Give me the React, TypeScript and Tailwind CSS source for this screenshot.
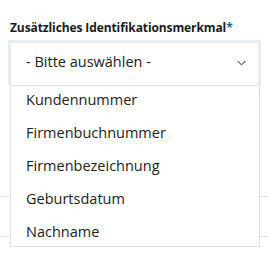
import React from "react";

const items = ["Kundennummer", "Firmenbuchnummer", "Firmenbezeichnung", "Geburtsdatum", "Nachname"];

export default function App() {
  return (
    <div className="relative w-[268px] h-[271px] bg-white overflow-hidden" style={{ fontFamily: '"Open Sans", "Noto Sans", sans-serif' }}>
      <div className="pt-[19px] pl-[10px]">
        <div className="text-[12px] font-bold leading-[18px] text-[#1b1b1b] tracking-[-0.1px]">
          Zusätzliches Identifikationsmerkmal<span className="text-[#0a6e8a]">*</span>
        </div>
      </div>
      <div className="relative ml-[8px] mt-[3px] w-[253px] h-[45px] border-[3px] border-b-0 border-[#e4eef2] bg-white">
        <div className="flex items-center justify-between h-full pl-[15px] pr-[12px] pb-[3px]">
          <span className="text-[14.5px] text-[#222] leading-none">- Bitte auswählen -</span>
          <svg width="9" height="6" viewBox="0 0 9 6" fill="none">
            <path d="M0.7 1l3.8 3.8 3.8-3.8" stroke="#666" strokeWidth="1.1" />
          </svg>
        </div>
      </div>
      <div className="mt-[111px] border-t border-[#dde8ec] h-[40px]" />
      <div className="border-t border-[#dde8ec] h-[40px]" />
      <div className="absolute left-[10px] top-[85px] w-[250px] h-[162px] bg-white border border-[#d8e6ec] overflow-hidden">
        <div className="-mt-[3px]">
          {items.map((t) => (
            <div key={t} className="h-[33px] flex items-center pl-[15px] text-[14.5px] text-[#222]">
              {t}
            </div>
          ))}
        </div>
      </div>
    </div>
  );
}
